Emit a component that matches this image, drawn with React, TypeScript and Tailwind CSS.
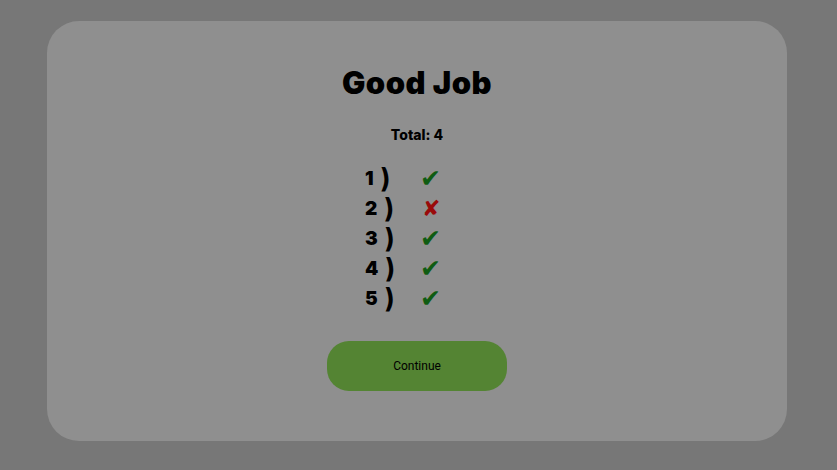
export default function App() {
  const rows: { n: number; ok: boolean }[] = [
    { n: 1, ok: true },
    { n: 2, ok: false },
    { n: 3, ok: true },
    { n: 4, ok: true },
    { n: 5, ok: true },
  ];
  return (
    <div className="w-[837px] h-[470px] bg-[#777777] pt-[21px] pl-[47px]">
      <div
        className="w-[740px] h-[420px] bg-[#8f8f8f] rounded-[32px] flex flex-col items-center pt-[42px]"
        style={{ fontFamily: "Inter, 'DejaVu Sans', sans-serif" }}
      >
        <div className="text-[31px] font-black leading-[40px] text-black tracking-[0.5px]">Good Job</div>
        <div className="mt-[22px] text-[14px] font-extrabold leading-[20px] text-black">Total: 4</div>
        <div className="mt-[19px] flex flex-col w-[104px]">
          {rows.map((r) => (
            <div key={r.n} className="h-[30px] flex items-center">
              <div className="w-[55px] flex items-center text-black font-black">
                <span className="text-[19px] leading-[30px]">{r.n}</span>
                <span className="text-[27px] leading-[30px] ml-[7px] font-bold">)</span>
              </div>
              <div className="flex">
                {r.ok ? (
                  <span className="text-[25px] leading-[30px] text-[#0f5c12]" style={{ fontFamily: "'DejaVu Sans', sans-serif" }}>✔</span>
                ) : (
                  <span className="text-[22px] leading-[30px] text-[#9a0a0a] ml-[2px]" style={{ fontFamily: "'DejaVu Sans', sans-serif" }}>✘</span>
                )}
              </div>
            </div>
          ))}
        </div>
        <button
          className="mt-[27px] w-[180px] h-[50px] rounded-[22px] bg-[#548433] text-[12px] text-black"
          style={{ fontFamily: "Roboto, sans-serif" }}
        >
          Continue
        </button>
      </div>
    </div>
  );
}
